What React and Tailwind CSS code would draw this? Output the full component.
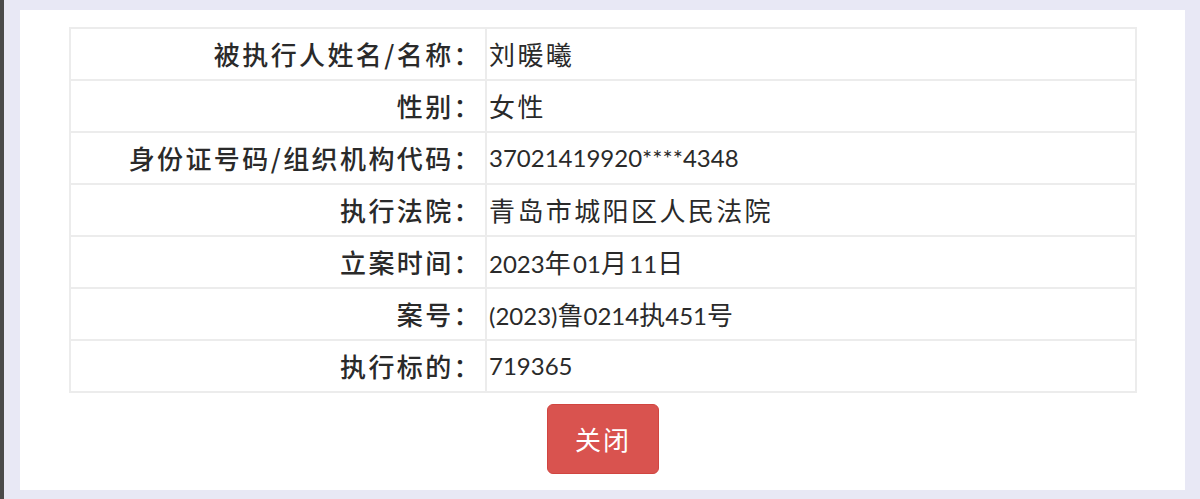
import React from "react";

const N = ({ children }) => (
  <span className="font-['Lato'] text-[24px] tracking-normal font-normal">{children}</span>
);

const rows = [
  ["被执行人姓名/名称：", "刘暖曦"],
  ["性别：", "女性"],
  ["身份证号码/组织机构代码：", <N key="a">37021419920****4348</N>],
  ["执行法院：", "青岛市城阳区人民法院"],
  ["立案时间：", <span key="b"><N>2023</N>年<N>01</N>月<N>11</N>日</span>],
  ["案号：", <span key="c"><N>(2023)</N><span className="tracking-normal">鲁</span><N>0214</N><span className="tracking-normal">执</span><N>451</N>号</span>],
  ["执行标的：", <N key="d">719365</N>],
];

export default function App() {
  return (
    <div className="w-[1200px] h-[499px] bg-[#e8e8f5] flex font-['Noto_Sans_CJK_SC',sans-serif] text-[#2a2a2a]">
      <div className="w-[4px] h-full bg-[#4a4a4a]" />
      <div className="ml-[16px] mt-[10px] w-[1165px] h-[480px] bg-white pl-[49px] pr-[48px] pt-[17px] flex flex-col">
        <div className="border-2 border-[#ececec]">
          {rows.map(([label, value], i) => (
            <div
              key={i}
              className={`flex items-center ${i > 0 ? "h-[52px] border-t-2 border-[#ececec]" : "h-[50px]"}`}
            >
              <div className="w-[414px] h-full flex items-center justify-end pr-[3px] text-[26px] tracking-[2.4px] leading-none font-medium">
                {label}
              </div>
              <div className="h-full border-l-2 border-[#ececec] flex items-center pl-[2px] text-[26px] tracking-[2.4px] leading-none flex-1">
                {value}
              </div>
            </div>
          ))}
        </div>
        <div className="flex justify-center mt-[11px]">
          <button className="w-[112px] h-[70px] rounded-[6px] bg-[#d9534f] border border-[#d14540] text-white text-[26px] tracking-[2px] leading-none flex items-center justify-center">
            关闭
          </button>
        </div>
      </div>
    </div>
  );
}
